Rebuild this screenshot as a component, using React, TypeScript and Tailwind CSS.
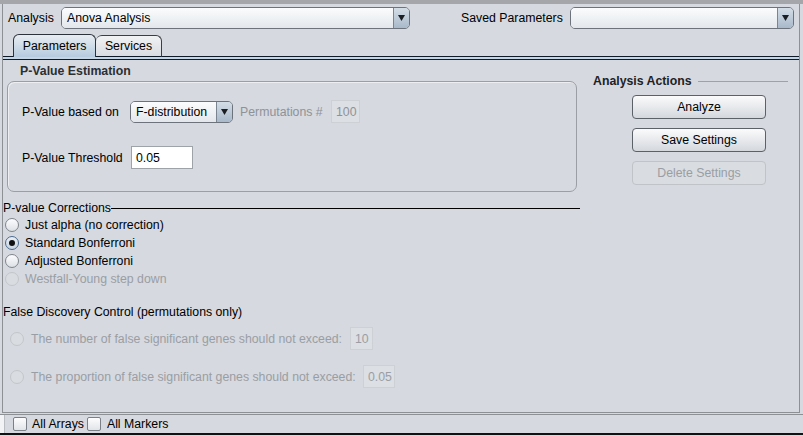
import React from 'react';

const Arrow: React.FC = () => (
  <svg width="7" height="6" viewBox="0 0 7 6">
    <path d="M0 0 H7 L3.5 6 Z" fill="#1b1f24" />
  </svg>
);

const Combo: React.FC<{ value?: string; className?: string }> = ({ value, className }) => (
  <div className={`flex h-[22px] rounded-[5px] border border-[#6d737b] overflow-hidden ${className ?? ''}`}>
    <div className="flex-1 flex items-center pl-[5px] bg-gradient-to-b from-[#fbfcfd] to-[#e3e7ec] text-black">{value}</div>
    <div className="w-[16px] flex items-center justify-center border-l border-[#7a8591] bg-gradient-to-b from-[#d3dde7] to-[#a9b9ca]">
      <Arrow />
    </div>
  </div>
);

const Radio: React.FC<{ checked?: boolean; disabled?: boolean }> = ({ checked, disabled }) => (
  <div
    className={`w-[14px] h-[14px] rounded-full border flex items-center justify-center ${
      disabled
        ? 'border-[#c3c6ca] bg-[#d9dce0]'
        : checked
        ? 'border-[#4a6a8e] bg-gradient-to-b from-[#e9eef4] to-[#c9d5e2]'
        : 'border-[#80858c] bg-gradient-to-b from-[#fdfdfe] to-[#dde1e6]'
    }`}
  >
    {checked && <div className="w-[6px] h-[6px] rounded-full bg-[#111]" />}
  </div>
);

const Check: React.FC = () => (
  <div className="w-[14px] h-[14px] rounded-[2px] border border-[#7b8088] bg-gradient-to-b from-[#fdfdfe] to-[#e1e4e8]" />
);

const Btn: React.FC<{ label: string; disabled?: boolean }> = ({ label, disabled }) => (
  <div
    className={`w-[134px] h-[24px] rounded-[4px] border flex items-center justify-center ${
      disabled
        ? 'border-[#c0c4c9] bg-[#d9dce1] text-[#9a9ea4]'
        : 'border-[#5c6168] bg-gradient-to-b from-[#fbfbfc] to-[#d4d8dd] text-black'
    }`}
  >
    {label}
  </div>
);

const App: React.FC = () => {
  return (
    <div className="w-[803px] h-[436px] bg-[#d6d9df] flex flex-col text-[12.3px] leading-[14px] text-black font-['Liberation_Sans',Arial,sans-serif] overflow-hidden">
      {/* top strip */}
      <div className="h-[4px] bg-[#a4a6a9]" />

      <div className="flex-1 flex flex-col ml-[2px] mr-[3px] border-l border-r border-[#8d9095]">
        {/* header */}
        <div className="flex items-center h-[22px] mt-[3px]">
          <span className="ml-[5px] w-[53px]">Analysis</span>
          <Combo value="Anova Analysis" className="w-[349px]" />
          <span className="ml-[51px] w-[109px]">Saved Parameters</span>
          <Combo className="w-[224px]" />
        </div>

        {/* tabs */}
        <div className="flex items-end h-[23px] mt-[5px]">
          <div className="w-[10px] border-b border-[#0f1a28]" />
          <div className="w-[83px] h-[23px] rounded-t-[6px] border border-b-0 border-[#2c333b] bg-gradient-to-b from-[#e8edf2] to-[#b6cbdf] flex items-center justify-center">
            Parameters
          </div>
          <div className="w-[66px] h-[22px] rounded-t-[6px] border border-l-0 border-[#3a3f45] border-b-[#0f1a28] bg-gradient-to-b from-[#f0f2f4] to-[#d9dce1] flex items-center justify-center">
            Services
          </div>
          <div className="flex-1 border-b border-[#0f1a28]" />
        </div>
        <div className="h-[3px] bg-[#c4d5e6] border-b border-[#0f1a28]" />

        {/* content */}
        <div className="flex-1 flex border-b border-[#8d9095]">
          <div className="w-[577px] flex flex-col">
            <div className="mt-[4px] ml-[17px] font-bold text-[#2b2f33]">P-Value Estimation</div>
            <div className="mt-[3px] ml-[4px] w-[570px] h-[111px] rounded-[7px] border border-[#9b9fa5] shadow-[inset_1px_1px_0_#eceef1] flex flex-col">
              <div className="flex items-center h-[23px] mt-[18px] ml-[14px]">
                <span className="w-[108px]">P-Value based on</span>
                <Combo value="F-distribution" className="w-[103px]" />
                <span className="ml-[7px] w-[91px] text-[#8e9298]">Permutations #</span>
                <div className="w-[29px] h-[23px] border border-[#cdd0d4] bg-[#dcdfe3] text-[#8e9298] flex items-center pl-[4px]">100</div>
              </div>
              <div className="flex items-center h-[23px] mt-[23px] ml-[14px]">
                <span className="w-[109px]">P-Value Threshold</span>
                <div className="w-[62px] h-[23px] border border-[#9ea3a9] bg-white flex items-center pl-[4px]">0.05</div>
              </div>
            </div>

            <div className="flex items-center mt-[9px]">
              <span>P-value Corrections</span>
              <div className="flex-1 h-px bg-black" />
            </div>
            <div className="flex flex-col mt-[1px] ml-[2px]">
              {[
                { t: 'Just alpha (no correction)' },
                { t: 'Standard Bonferroni', c: true },
                { t: 'Adjusted Bonferroni' },
                { t: 'Westfall-Young step down', d: true },
              ].map((r) => (
                <div key={r.t} className="flex items-center h-[18px] gap-[6px]">
                  <Radio checked={r.c} disabled={r.d} />
                  <span className={r.d ? 'text-[#9a9ea4]' : ''}>{r.t}</span>
                </div>
              ))}
            </div>

            <div className="mt-[17px]">False Discovery Control (permutations only)</div>
            <div className="flex items-center h-[23px] mt-[8px] ml-[7px] text-[#9a9ea4]">
              <Radio disabled />
              <span className="ml-[7px] w-[319px]">The number of false significant genes should not exceed:</span>
              <div className="w-[23px] h-[23px] border border-[#cdd0d4] bg-[#dcdfe3] flex items-center pl-[4px]">10</div>
            </div>
            <div className="flex items-center h-[23px] mt-[15px] ml-[7px] text-[#9a9ea4]">
              <Radio disabled />
              <span className="ml-[7px] w-[332px]">The proportion of false significant genes should not exceed:</span>
              <div className="w-[32px] h-[23px] border border-[#cdd0d4] bg-[#dcdfe3] flex items-center pl-[4px]">0.05</div>
            </div>
          </div>

          <div className="flex-1 flex flex-col">
            <div className="flex items-center mt-[14px] ml-[13px] mr-[11px]">
              <span className="font-bold text-[#1e2226]">Analysis Actions</span>
              <div className="flex-1 h-px bg-[#9ea2a8] ml-[6px]" />
            </div>
            <div className="flex flex-col gap-[9px] mt-[7px] ml-[52px]">
              <Btn label="Analyze" />
              <Btn label="Save Settings" />
              <Btn label="Delete Settings" disabled />
            </div>
          </div>
        </div>
      </div>

      {/* bottom bar */}
      <div className="h-[21px] mt-[1px] mb-[1px] flex items-center border-t border-[#8d9095] border-b-2 border-b-[#111]">
        <div className="w-[5px] h-full bg-[#f2f3f5] border-r border-[#b9bcc0]" />
        <div className="ml-[8px]"><Check /></div>
        <span className="ml-[5px]">All Arrays</span>
        <div className="ml-[3px]"><Check /></div>
        <span className="ml-[6px]">All Markers</span>
      </div>
    </div>
  );
};

export default App;
